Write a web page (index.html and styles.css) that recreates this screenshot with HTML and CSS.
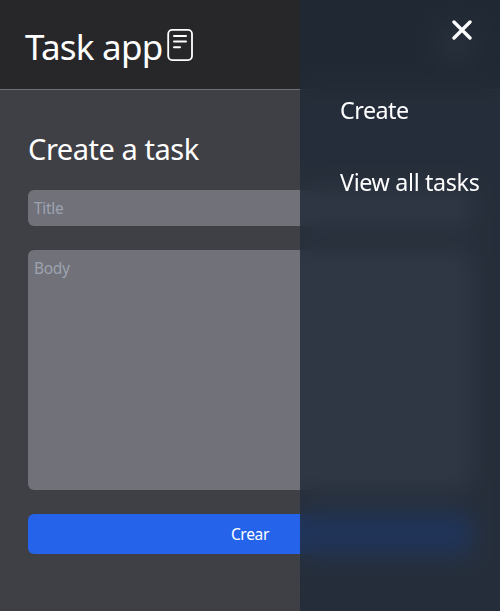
FILE: index.html
```html
<!DOCTYPE html>
<html lang="en">
<head>
<meta charset="utf-8">
<title>Task app</title>
<link rel="stylesheet" href="styles.css">
</head>
<body>
<header class="header">
  <h1 class="brand"><span class="brand-name">Task app</span>
    <svg class="brand-icon" viewBox="0 0 26 32" fill="none" stroke="currentColor" stroke-width="2" stroke-linecap="round"><rect class="sheet" x="1.2" y="0.9" width="23.8" height="30.2" rx="4"/><path d="M7 7h12M7 12.6h12M7 18.3h6"/></svg>
  </h1>
  <div class="burger"><svg viewBox="0 0 24 24" fill="none" stroke="currentColor" stroke-width="1" stroke-linecap="round"><path d="M4 6h16M4 12h16M4 18h16"/></svg></div>
</header>
<main class="main">
  <h2 class="heading">Create a task</h2>
  <form class="form">
    <input class="field title" type="text" placeholder="Title">
    <textarea class="field body" placeholder="Body"></textarea>
    <button class="submit" type="button">Crear</button>
  </form>
</main>
<aside class="menu">
  <button class="close" type="button" aria-label="Close"><svg viewBox="0 0 20 20" fill="none" stroke="currentColor" stroke-width="3.4" stroke-linecap="round"><path d="M2 2l16 16M18 2L2 18"/></svg></button>
  <nav class="links"><a class="link create">Create</a><a class="link all">View all tasks</a></nav>
</aside>
</body>
</html>
```
FILE: styles.css
```css
* { box-sizing: border-box; }
body {
  margin: 0;
  height: 611px;
  overflow: hidden;
  background: #3f3f46;
  color: #fff;
  font-family: "Noto Sans", "Open Sans", sans-serif;
}
h1, h2 { margin: 0; font-weight: 400; }
svg { display: block; }
.header {
  height: 90px;
  padding: 0 20px 0 25px;
  display: flex;
  align-items: center;
  justify-content: space-between;
  background: #27272a;
  border-bottom: 1px solid #71717a;
}
.brand { display: flex; align-items: center; font-size: 35px; line-height: 40px; }
.brand-name { width: 142px; letter-spacing: -0.75px; white-space: nowrap; padding-top: 4px; }
.brand-icon { width: 26px; height: 32px; }
.sheet { stroke-width: 1.8; }
.burger { width: 48px; color: #fff; }
.main { padding: 41px 28px 0; }
.heading { font-size: 29px; line-height: 36px; height: 59px; letter-spacing: -0.45px; }
.form { display: flex; flex-direction: column; gap: 24px; }
.field {
  display: block;
  width: 100%;
  margin: 0;
  padding: 6px;
  border: 0;
  border-radius: 6px;
  resize: none;
  background: #71717a;
  color: #fff;
  font: 15.5px/24px "Noto Sans", "Open Sans", sans-serif;
  letter-spacing: -0.3px;
}
.field::placeholder { color: #9ca3af; opacity: 1; }
.title { height: 36px; }
.body { height: 240px; }
.submit {
  height: 40px;
  padding: 0;
  border: 0;
  border-radius: 6px;
  background: #2563eb;
  color: #fff;
  font: 15.5px/24px "Noto Sans", "Open Sans", sans-serif;
  letter-spacing: -0.3px;
}
.menu {
  position: fixed;
  top: 0;
  right: 0;
  bottom: 0;
  width: 200px;
  padding: 20px 0 0 40px;
  background: rgba(31, 41, 55, 0.8);
  backdrop-filter: blur(12px);
}
.close {
  display: block;
  width: 20px;
  margin: 0 28px 0 auto;
  padding: 0;
  border: 0;
  background: none;
  color: #fff;
}
.links { display: flex; flex-direction: column; gap: 40px; padding-top: 54px; }
.link { font-size: 23.3px; line-height: 32px; letter-spacing: -0.35px; white-space: nowrap; }
.create { letter-spacing: -0.5px; }
```
